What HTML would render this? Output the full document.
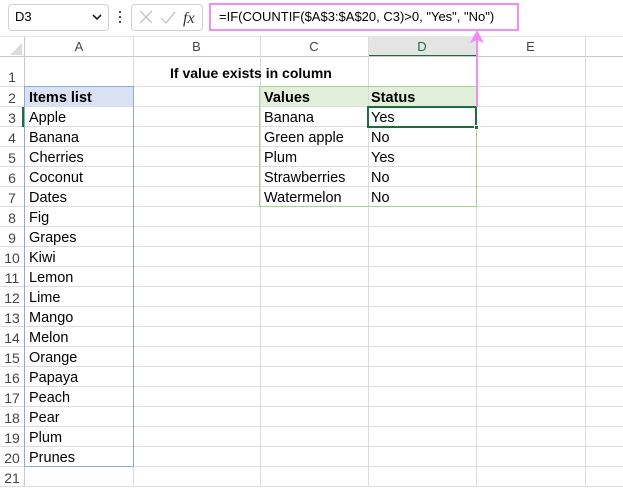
<!DOCTYPE html>
<html><head><style>
*{margin:0;padding:0;box-sizing:border-box}
body{width:623px;height:487px;overflow:hidden;background:#fff;font-family:"Liberation Sans",Arial,sans-serif;position:relative}
.a{position:absolute}
.t{position:absolute;font-size:14.5px;color:#000;line-height:20px;white-space:nowrap}
.h{position:absolute;font-size:13px;color:#444;text-align:center;line-height:20px}
.vl{position:absolute;width:1px;background:#dcdcdc}
.hl{position:absolute;height:1px;background:#dcdcdc}
</style></head><body>
<div class="a" style="left:8px;top:4px;width:101px;height:27px;border:1px solid #d0d0d0;border-radius:4px"></div>
<div class="t" style="left:15px;top:7px;font-size:13px">D3</div>
<svg class="a" style="left:92px;top:14px" width="10" height="7"><path d="M1 1 L5 5 L9 1" stroke="#222" stroke-width="1.6" fill="none"/></svg>
<div class="a" style="left:119px;top:11px;width:2px;height:2px;background:#444"></div>
<div class="a" style="left:119px;top:16px;width:2px;height:2px;background:#444"></div>
<div class="a" style="left:119px;top:21px;width:2px;height:2px;background:#444"></div>
<div class="a" style="left:131px;top:4px;width:72px;height:27px;border:1px solid #d0d0d0;border-radius:4px"></div>
<svg class="a" style="left:137px;top:9px" width="60" height="18"><path d="M3 2 L15 14 M15 2 L3 14" stroke="#bbb" stroke-width="1.2"/><path d="M24 9 L29 14 L38 3" stroke="#bbb" stroke-width="1.2" fill="none"/><text x="46" y="14" font-family="Liberation Serif" font-style="italic" font-size="16" fill="#333">fx</text></svg>
<div class="a" style="left:209px;top:3px;width:310px;height:28px;border:2px solid #f58cf5"></div>
<div class="t" style="left:219px;top:7px;font-size:13px">=IF(COUNTIF($A$3:$A$20, C3)&gt;0, "Yes", "No")</div>
<div class="hl" style="left:0;top:36px;width:623px;background:#e6e6e6"></div>
<svg class="a" style="left:10px;top:43px" width="12" height="12"><path d="M12 0 L12 12 L0 12Z" fill="#dcdcdc"/></svg>
<div class="h" style="left:25px;top:37px;width:108px">A</div>
<div class="h" style="left:133px;top:37px;width:127px">B</div>
<div class="h" style="left:260px;top:37px;width:108px">C</div>
<div class="a" style="left:368px;top:37px;width:108px;height:20px;background:#e4e4e4"></div>
<div class="h" style="left:368px;top:37px;width:108px;color:#1e6b3f">D</div>
<div class="a" style="left:368px;top:55px;width:108px;height:2px;background:#1e6b3f"></div>
<div class="h" style="left:476px;top:37px;width:109px">E</div>
<div class="hl" style="left:0;top:56px;width:623px;background:#c8c8c8"></div>
<div class="vl" style="left:24px;top:37px;height:450px;background:#c8c8c8"></div>
<div class="a" style="left:25px;top:87px;width:108px;height:20px;background:#d9e1f2"></div>
<div class="a" style="left:260px;top:87px;width:216px;height:20px;background:#e2efda"></div>
<div class="vl" style="left:133px;top:37px;height:450px"></div>
<div class="vl" style="left:260px;top:37px;height:450px"></div>
<div class="vl" style="left:368px;top:37px;height:450px"></div>
<div class="vl" style="left:476px;top:37px;height:450px"></div>
<div class="vl" style="left:585px;top:37px;height:450px"></div>
<div class="hl" style="left:0;top:86px;width:623px"></div>
<div class="h" style="left:0;top:67px;width:24px;font-size:14px">1</div>
<div class="t" style="left:170px;top:63px;font-weight:bold;font-size:14px">If value exists in column</div>
<div id="g"></div>
<script>
var items=["Items list","Apple","Banana","Cherries","Coconut","Dates","Fig","Grapes","Kiwi","Lemon","Lime","Mango","Melon","Orange","Papaya","Peach","Pear","Plum","Prunes",""];
var C=["Values","Banana","Green apple","Plum","Strawberries","Watermelon"],D=["Status","Yes","No","Yes","No","No"];
var h="";
for(var i=0;i<20;i++){var y=87+i*20;
h+='<div class="hl" style="left:0;top:'+(y+19)+'px;width:623px"></div>';
h+='<div class="h" style="left:0;top:'+(y+1)+'px;width:24px;font-size:14px">'+(i+2)+'</div>';
var b=i==0?'font-weight:bold;':'';
h+='<div class="t" style="left:29px;top:'+(y+1)+'px;'+b+'">'+items[i]+'</div>';
if(i<6){h+='<div class="t" style="left:264px;top:'+(y+1)+'px;'+b+'">'+C[i]+'</div><div class="t" style="left:371px;top:'+(y+1)+'px;'+b+'">'+D[i]+'</div>';}
}
document.getElementById("g").outerHTML=h;
</script>
<div class="a" style="left:24px;top:86px;width:110px;height:381px;border:1px solid #8ea9db"></div>
<div class="a" style="left:259px;top:86px;width:218px;height:121px;border:1px solid #a9d08e"></div>
<div class="a" style="left:22px;top:107px;width:2px;height:20px;background:#1e6b3f"></div>
<div class="a" style="left:367px;top:106px;width:110px;height:22px;border:2px solid #1e6b3f"></div>
<div class="a" style="left:474px;top:125px;width:5px;height:5px;background:#1e6b3f;border:1px solid #fff"></div>
<div class="a" style="left:476px;top:40px;width:2px;height:67px;background:#f58cf5"></div>
<svg class="a" style="left:470px;top:30px" width="14" height="14"><path d="M7 0 L14 13 L7 10 L0 13Z" fill="#f58cf5"/></svg>
</body></html>
